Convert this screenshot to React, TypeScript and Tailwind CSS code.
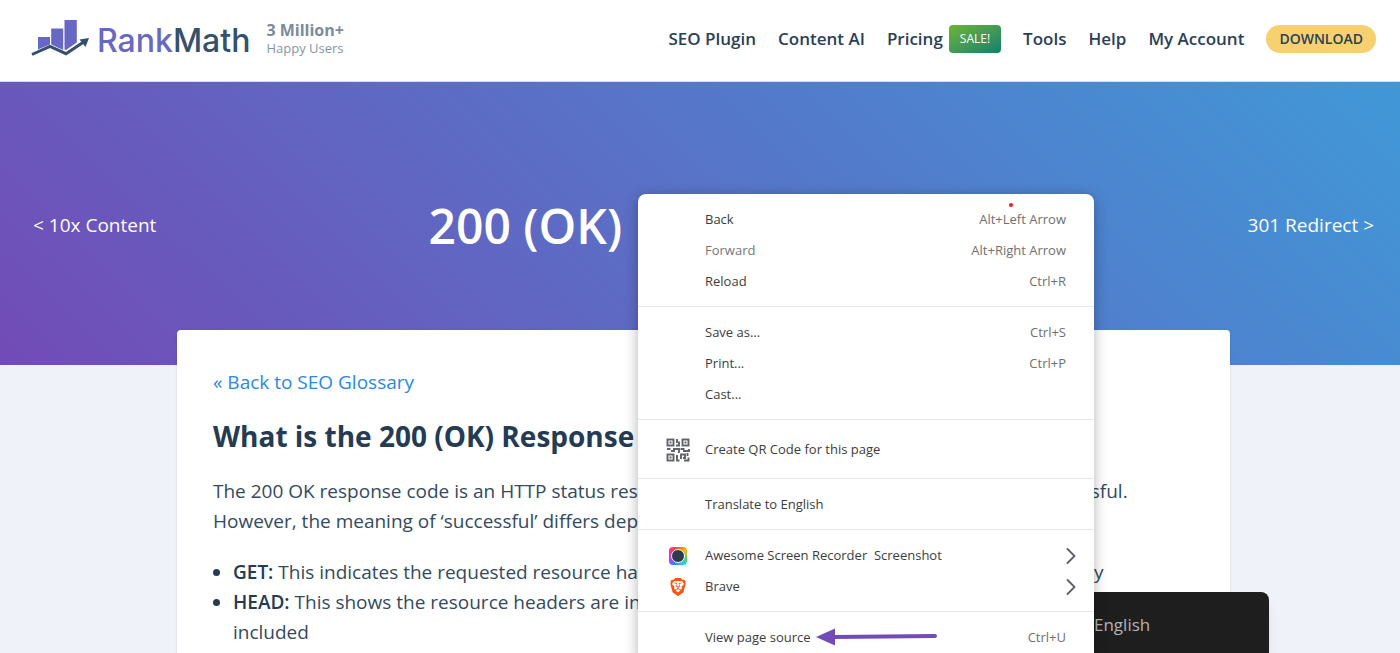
import { ChevronRight } from "lucide-react";
import { SiBrave } from "react-icons/si";
import type { ReactNode } from "react";

const NAV_AFTER = ["Tools", "Help", "My Account"] as const;

interface MenuEntry {
  label: string;
  shortcut?: string;
  icon?: ReactNode;
  submenu?: boolean;
  disabled?: boolean;
}

const MENU: MenuEntry[][] = [
  [
    { label: "Back", shortcut: "Alt+Left Arrow" },
    { label: "Forward", shortcut: "Alt+Right Arrow", disabled: true },
    { label: "Reload", shortcut: "Ctrl+R" },
  ],
  [
    { label: "Save as...", shortcut: "Ctrl+S" },
    { label: "Print...", shortcut: "Ctrl+P" },
    { label: "Cast..." },
  ],
  [{ label: "Create QR Code for this page", icon: <QrIcon /> }],
  [{ label: "Translate to English" }],
  [
    { label: "Awesome Screen Recorder  Screenshot", icon: <RecorderIcon />, submenu: true },
    { label: "Brave", icon: <SiBrave className="size-[18px] text-[#fb5412]" />, submenu: true },
  ],
  [{ label: "View page source", shortcut: "Ctrl+U" }],
];

function LogoMark() {
  return (
    <svg viewBox="0 0 58 40" className="h-10 w-[58px]" aria-hidden="true">
      <g fill="#6867c4">
        <path d="M7 18h12v7.500l-12 5z" />
        <path d="M20.200 9.500h12v21.500l-12-5.500z" />
        <path d="M33.500 1h12.300v22.500l-10.800 7.500-1.500-.5z" />
      </g>
      <path d="M1 35.500l18-8 16 7.200 18-12" fill="none" stroke="#34506a" strokeWidth="3" />
      <path d="M58 19l-3.500 9-6-7.500z" fill="#34506a" />
    </svg>
  );
}

function QrIcon() {
  return (
    <svg viewBox="0 0 24 24" className="size-6" fill="none" stroke="#5f6368" strokeWidth="1.900" aria-hidden="true">
      <rect x="1.500" y="1.500" width="6" height="6" />
      <rect x="16.500" y="1.500" width="6" height="6" />
      <rect x="1.500" y="16.500" width="6" height="6" />
      <path d="M3.500 4.500h2M18.500 4.500h2M3.500 19.500h2" />
      <path d="M11 1v4M13 3.500v4h-3M1 11h3.500M5 13h3v-2h5v4M14.500 11h4M17 13h6v-2M11 17v5.500h2.500M15 21v-4.500h4v3.500h-2M21.500 15v3M18 22.500h4.500v-3" />
    </svg>
  );
}

function RecorderIcon() {
  return (
    <span className="flex size-[18px] items-center justify-center rounded bg-[conic-gradient(#ff5a1f,#f7b51c,#5fd35a,#29c5f6,#3d7bff,#c23cf0,#ff2f8a,#ff5a1f)]">
      <span className="size-[14px] rounded-full border border-white bg-[#2f3b4c]" />
    </span>
  );
}

function MenuItem({ label, shortcut, icon, submenu, disabled }: MenuEntry) {
  return (
    <button
      type="button"
      role="menuitem"
      disabled={disabled}
      className="flex h-[31px] w-full items-center pr-[18px] text-left text-[13px] text-[#3c3c3c] disabled:text-[#777777]"
    >
      <span className="flex w-[67px] items-center justify-center pl-[13px]">{icon}</span>
      <span className="grow whitespace-pre">{label}</span>
      {shortcut && <span className="pr-[10px] text-[#6f6f6f]">{shortcut}</span>}
      {submenu && <ChevronRight className="-mr-[9px] size-7 text-[#5f6368]" strokeWidth={1.6} />}
    </button>
  );
}

function ContextMenu() {
  return (
    <div
      role="menu"
      className="absolute left-[638px] top-[194px] z-20 w-[456px] rounded-lg bg-white shadow-[0_3px_14px_rgba(0,0,0,0.3)]"
    >
      <div className="divide-y divide-[#e6e6e6]">
        {MENU.map((group) => (
          <div
            key={group[0].label}
            className={group[0].label.startsWith("Create") ? "pb-[13px] pt-[14px]" : "pb-[9px] pt-[10px]"}
          >
            {group.map((entry) => (
              <MenuItem key={entry.label} {...entry} />
            ))}
          </div>
        ))}
      </div>
      <span className="absolute left-[371px] top-[9px] size-1 rounded-full bg-[#ee1c24]" />
      <svg viewBox="0 0 122 18" className="absolute left-[178px] top-[434px] h-[18px] w-[122px]" aria-hidden="true">
        <path d="M18 9l101-1" stroke="#724bb7" strokeWidth="4" strokeLinecap="round" />
        <path d="M0 9l19-8.500v17z" fill="#724bb7" />
      </svg>
    </div>
  );
}

function Header() {
  return (
    <header className="flex h-[82px] items-center justify-between border-b border-[#d5dcea] bg-white pb-1 pl-[31px] pr-6">
      <div className="flex items-center gap-4">
        <a href="#" className="flex items-center gap-2">
          <LogoMark />
          <span className="pt-1 font-[Inter,sans-serif] text-[32px] font-medium leading-none text-[#34506a]">
            <span className="text-[#6867c4]">Rank</span>Math
          </span>
        </a>
        <p className="text-[13px] leading-[18px] text-[#8595a5]">
          <span className="block text-[16px] font-bold text-[#7b8b9c]">3 Million+</span>
          Happy Users
        </p>
      </div>
      <nav className="flex items-center gap-[22px] text-[17px] font-semibold text-[#2a4058]">
        <a href="#">SEO Plugin</a>
        <a href="#">Content AI</a>
        <a href="#" className="flex items-center gap-[6px]">
          Pricing
          <span className="rounded bg-linear-to-br from-[#6bb52c] to-[#058068] px-[11px] py-1 text-[12px] font-normal leading-5 text-white">
            SALE!
          </span>
        </a>
        {NAV_AFTER.map((item) => (
          <a key={item} href="#">{item}</a>
        ))}
        <a href="#" className="rounded-full bg-[#f7d070] px-[13px] text-[14px] leading-7">DOWNLOAD</a>
      </nav>
    </header>
  );
}

function Article() {
  return (
    <article className="relative -mt-[35px] ml-[177px] mr-[170px] rounded-t bg-white px-9 pb-16 pt-9 text-[19px] leading-[30px] text-[#334a60] shadow-sm">
      <a href="#" className="block leading-8 text-[#2b88e0]">« Back to SEO Glossary</a>
      <h2 className="mt-[18px] text-[28px] font-bold leading-10 text-[#243b53]">What is the 200 (OK) Response Code?</h2>
      <p className="mt-5">
        The 200 OK response code is an HTTP status response code which indicates the request was successful. However,
        the meaning of ‘successful’ differs depending on the HTTP request method:
      </p>
      <ul className="mt-[21px] list-disc pl-5 marker:text-[#243b53]">
        <li>
          <strong className="font-semibold text-[#243b53]">GET:</strong> This indicates the requested resource has been
          fetched and transmitted in the message body
        </li>
        <li>
          <strong className="font-semibold text-[#243b53]">HEAD:</strong> This shows the resource headers are in
          <br />
          included
        </li>
      </ul>
    </article>
  );
}

export default function App() {
  return (
    <div className="relative h-screen overflow-hidden bg-[#eff3f9] font-['Open_Sans','Noto_Sans',sans-serif]">
      <Header />
      <main>
        <section className="grid h-[283px] grid-cols-[1fr_550px_1fr] items-center bg-[linear-gradient(45deg,#724bb7,#4098d7)] pl-[33px] pr-[26px] pt-1 text-[19px] text-white">
          <a href="#">&lt; 10x Content</a>
          <h1 className="text-[48px] font-semibold">200 (OK)</h1>
          <a href="#" className="text-right">301 Redirect &gt;</a>
        </section>
        <Article />
      </main>
      <div className="absolute bottom-0 right-[131px] z-10 flex h-[61px] w-[240px] items-center rounded-tr-lg bg-[#1e1e1e] pl-[65px] pt-1 text-[17px] text-[#b4b4b4] shadow-lg">
        English
      </div>
      <ContextMenu />
    </div>
  );
}
